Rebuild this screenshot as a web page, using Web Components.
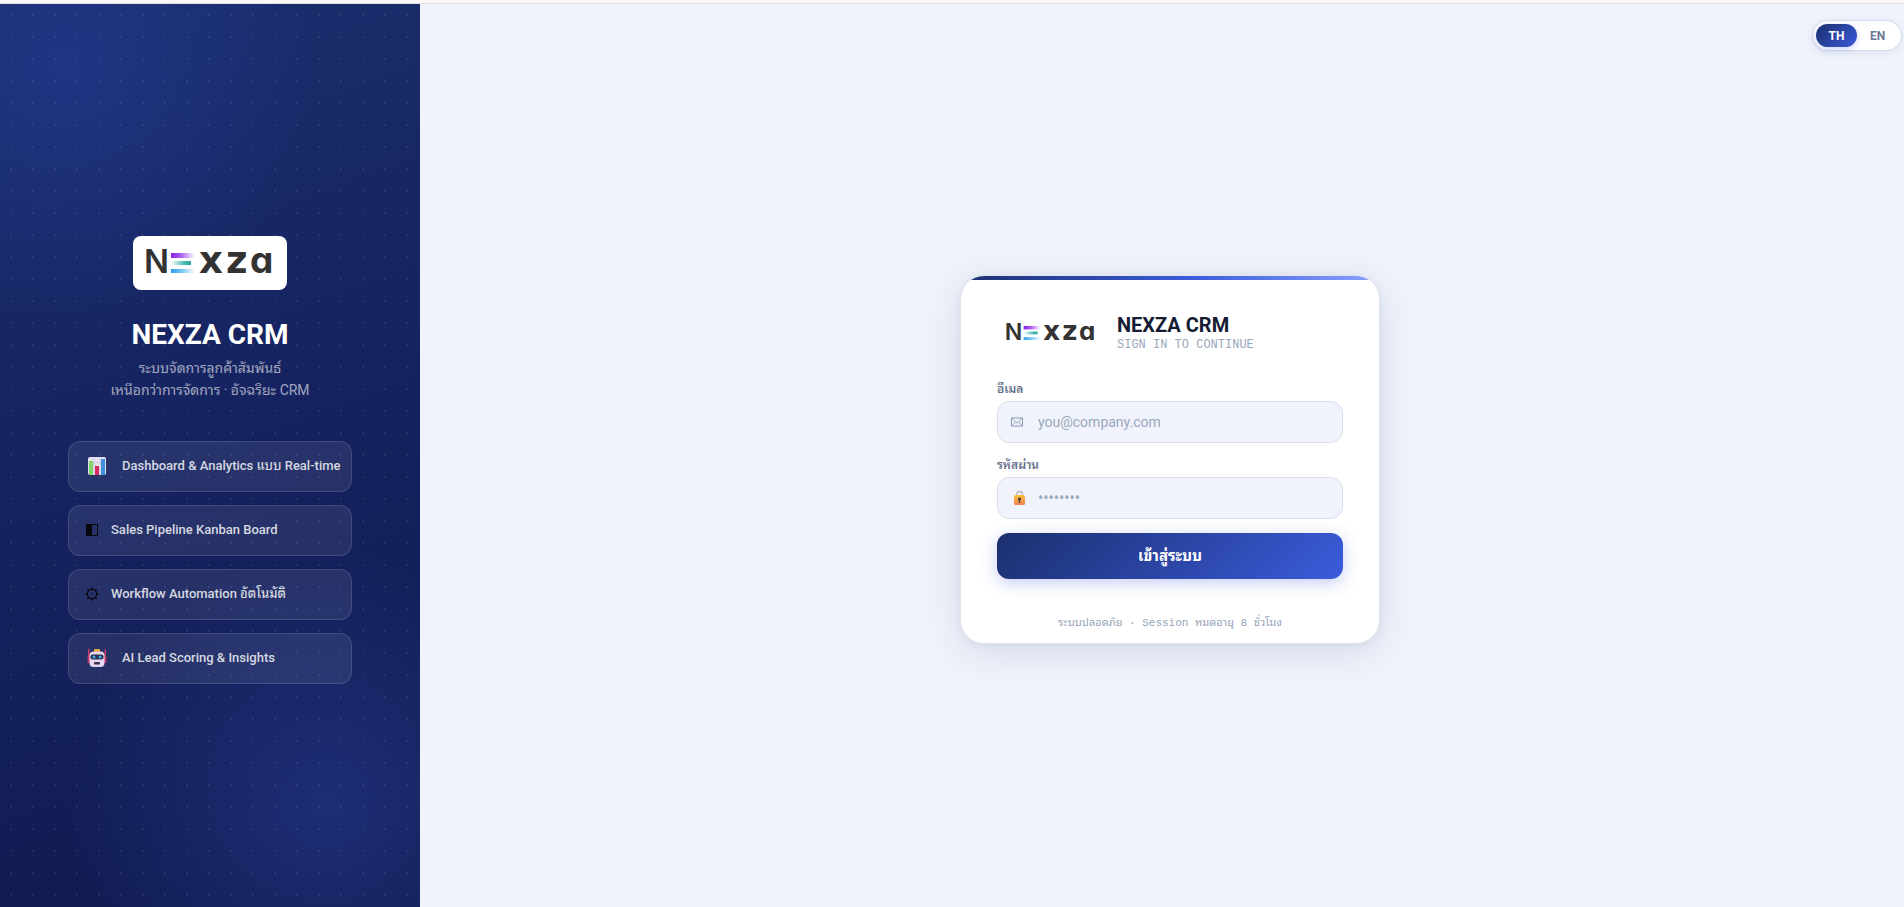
<!DOCTYPE html>
<html lang="th">
<head>
<meta charset="utf-8">
<meta name="viewport" content="width=device-width, initial-scale=1">
<title>NEXZA CRM</title>
<style>
html, body { height: 100%; margin: 0; }
body {
  --sans: Roboto, "Noto Sans Thai Looped", "Noto Looped Thai", Sarabun, Loma, Garuda, Waree, sans-serif;
  --mono: "Liberation Mono", "Noto Sans Thai Looped", "Noto Looped Thai", Sarabun, Loma, Garuda, Waree, monospace;
  font-family: var(--sans); background: #f0f3fb; color: #141c33;
}
</style>
</head>
<body>
<crm-login-page></crm-login-page>

<template id="t-page">
<style>
:host { display: flex; flex-direction: column; min-height: 100vh; }
.strip { height: 3px; background: #fcf8f8; border-bottom: 1px solid #dcdee4; }
.shell { flex: 1; display: grid; grid-template-columns: 420px minmax(0, 1fr); }
main { display: grid; padding: 8px 2px 0 18px; }
main > * { grid-area: 1 / 1; }
crm-lang-toggle { place-self: start end; margin-top: 8px; }
crm-login-card { place-self: center; width: 100%; max-width: 420px; }
</style>
<div class="strip"></div>
<div class="shell">
  <crm-brand-panel>
    <crm-feature icon="chart">Dashboard &amp; Analytics แบบ Real-time</crm-feature>
    <crm-feature icon="board">Sales Pipeline Kanban Board</crm-feature>
    <crm-feature icon="gear">Workflow Automation อัตโนมัติ</crm-feature>
    <crm-feature icon="robot">AI Lead Scoring &amp; Insights</crm-feature>
  </crm-brand-panel>
  <main>
    <crm-login-card></crm-login-card>
    <crm-lang-toggle></crm-lang-toggle>
  </main>
</div>
</template>

<template id="t-logo">
<style>
:host { display: block; }
svg { display: block; width: 100%; height: auto; }
text { font-family: Inter, sans-serif; font-weight: 700; fill: #333; font-feature-settings: "cv11"; }
.cap { font-weight: 600; }
.wide { font-family: "DejaVu Sans", sans-serif; }
</style>
<svg viewBox="0 0 154 54" role="img" aria-label="Nexza">
  <defs>
    <linearGradient id="p"><stop stop-color="#8a1fe8"/><stop offset=".4" stop-color="#a85cf0"/><stop offset="1" stop-color="#fff"/></linearGradient>
    <linearGradient id="g"><stop stop-color="#fff"/><stop offset=".7" stop-color="#3fb8ac"/><stop offset="1" stop-color="#2aa79b"/></linearGradient>
    <linearGradient id="b"><stop stop-color="#2a9df0"/><stop offset=".4" stop-color="#6cc3f5"/><stop offset="1" stop-color="#fff"/></linearGradient>
  </defs>
  <text x="11" y="37" font-size="33" class="cap">N</text>
  <rect x="38" y="17" width="24" height="5" fill="url(#p)"/>
  <rect x="38" y="25" width="20" height="4" fill="url(#g)"/>
  <rect x="38" y="33" width="24" height="4" fill="url(#b)"/>
  <text x="66 93" y="37" font-size="37" class="wide">xz</text>
  <text x="117" y="37" font-size="37">a</text>
</svg>
</template>

<template id="t-panel">
<style>
:host {
  display: flex; flex-direction: column; align-items: center; justify-content: center;
  box-sizing: border-box; padding: 8px 68px 0; color: #fff;
  background:
    radial-gradient(circle at 11px 11px, rgba(255,255,255,.07) 1px, transparent 1px) 0 0 / 22px 22px,
    radial-gradient(circle at 16% 7%, rgba(38,62,155,.5), transparent 250px),
    radial-gradient(circle at 78% 89%, rgba(46,68,160,.45), transparent 260px),
    linear-gradient(160deg, #1b2f6e 0%, #15225f 50%, #101a4e 100%);
}
crm-logo { width: 154px; background: #fff; border-radius: 8px; }
h1 { margin: 27px 0 0; font-size: 28px; line-height: 36px; font-weight: 700; }
p { margin: 4px 0 0; font-size: 14px; line-height: 22px; text-align: center; color: rgba(255,255,255,.6); }
.features { display: flex; flex-direction: column; gap: 13px; margin-top: 40px; align-self: stretch; }
</style>
<crm-logo></crm-logo>
<h1>NEXZA CRM</h1>
<p>ระบบจัดการลูกค้าสัมพันธ์<br>เหนือกว่าการจัดการ · อัจฉริยะ CRM</p>
<div class="features"><slot></slot></div>
</template>

<template id="t-feature">
<style>
:host {
  display: flex; align-items: center; gap: 12px; box-sizing: border-box; min-height: 51px; padding: 0 16px;
  border: 1px solid rgba(255,255,255,.13); border-radius: 12px; background: rgba(255,255,255,.08);
  font-size: 13px; line-height: 20px; font-weight: 500; color: rgba(255,255,255,.82); white-space: nowrap;
}
svg { display: block; flex: none; }
</style>
<span id="icon"></span><span><slot></slot></span>
</template>

<template id="t-card">
<style>
:host {
  display: block; box-sizing: border-box; position: relative; overflow: hidden; padding: 37px 36px 11px;
  border: 1px solid #e1e4ec; border-radius: 24px; background: #fff;
  box-shadow: 0 8px 40px rgba(27,47,110,.12), 0 2px 8px rgba(27,47,110,.06);
}
.bar { position: absolute; inset: 0 0 auto; height: 4px; background: linear-gradient(90deg, #1b2f6e, #3b5bdb 55%, #8aa2ff); }
header { display: flex; align-items: center; gap: 12px; margin-bottom: 28px; }
crm-logo { width: 108px; }
h2 { margin: 0; font-size: 20px; line-height: 24px; font-weight: 700; }
header p { margin: 0; font: 12px/16px var(--mono); color: #9aa8bc; }
form { display: flex; flex-direction: column; gap: 14px; }
button {
  height: 46px; border: 0; border-radius: 12px; color: #fff; font: 700 15px/20px var(--sans);
  background: linear-gradient(135deg, #1b2f6e, #3b5bdb); box-shadow: 0 4px 16px rgba(59,91,219,.3); cursor: pointer;
}
footer { margin-top: 35px; text-align: center; font: 11px/18px var(--mono); color: #94a3b8; }
</style>
<div class="bar"></div>
<header>
  <crm-logo></crm-logo>
  <div><h2>NEXZA CRM</h2><p>SIGN IN TO CONTINUE</p></div>
</header>
<form>
  <crm-field label="อีเมล" type="email" placeholder="you@company.com" icon="mail"></crm-field>
  <crm-field label="รหัสผ่าน" type="password" placeholder="••••••••" icon="lock"></crm-field>
  <button type="button">เข้าสู่ระบบ</button>
</form>
<footer>ระบบปลอดภัย · Session หมดอายุ 8 ชั่วโมง</footer>
</template>

<template id="t-field">
<style>
:host { display: block; }
label { display: block; margin-bottom: 4px; font-size: 12px; line-height: 16px; font-weight: 600; color: #64708b; }
.box { display: flex; align-items: center; box-sizing: border-box; height: 42px; border: 1px solid #d9dee8; border-radius: 12px; background: #f0f3fb; }
#icon { flex: none; width: 40px; }
svg { display: block; }
input { flex: 1; min-width: 0; padding: 0; border: 0; outline: 0; background: none; font: 14px/20px var(--sans); color: #141c33; }
input[type=password] { font-family: "Noto Sans", sans-serif; }
input::placeholder { color: #9aa8bc; opacity: 1; }
</style>
<label for="input"></label>
<div class="box"><span id="icon"></span><input id="input"></div>
</template>

<template id="t-toggle">
<style>
:host { display: flex; box-sizing: border-box; padding: 3px; border: 1px solid #d5dcf0; border-radius: 16px; background: #fff; box-shadow: 0 2px 8px rgba(27,47,110,.08); }
button { width: 41px; height: 23px; padding: 0; border: 0; border-radius: 12px; background: none; font: 700 12px/16px Roboto, sans-serif; color: #6b7a96; cursor: pointer; }
button[aria-pressed=true] { color: #fff; background: linear-gradient(135deg, #1b2f6e, #3b5bdb); box-shadow: 0 2px 6px rgba(59,91,219,.25); }
</style>
<button type="button" aria-pressed="true">TH</button><button type="button" aria-pressed="false">EN</button>
</template>

<script>
const icons = {
  chart: `<svg width="25" height="20" viewBox="0 0 25 20"><rect x="3" y="1" width="18" height="18" rx="2" fill="#e6e3f0"/><path d="M3 7h18M3 13h18M9 1v18M15 1v18" stroke="#c9c4dc" stroke-width=".7"/><rect x="4" y="5" width="4" height="14" fill="#80d668"/><rect x="10" y="10" width="4" height="9" fill="#d52c62"/><rect x="16" y="3" width="4" height="16" fill="#3d91df"/></svg>`,
  board: `<svg width="14" height="14" viewBox="0 0 14 14"><rect x="1.5" y="1.5" width="11" height="11" fill="none" stroke="#05070f"/><path d="M1 1h6v12H1z" fill="#05070f"/></svg>`,
  gear: `<svg width="14" height="14" viewBox="0 0 14 14" fill="none" stroke="#05070f"><circle cx="7" cy="7" r="4.7" stroke-width="1.2"/><circle cx="7" cy="7" r=".7" fill="#05070f" stroke="none"/><path d="M7 .5v2M7 11.5v2M.5 7h2M11.5 7h2M2.4 2.4l1.4 1.4M10.2 10.2l1.4 1.4M2.4 11.6l1.4-1.4M10.2 3.8l1.4-1.4" stroke-width="1.5"/></svg>`,
  robot: `<svg width="25" height="20" viewBox="-1 0 25 20"><path d="M2.7 1v9M19.3 1v9" stroke="#d33a68" stroke-width="1.4"/><rect x="1.6" y="7" width="3" height="8" rx="1" fill="#c53465"/><rect x="17.4" y="7" width="3" height="8" rx="1" fill="#c53465"/><rect x="8" y="1" width="6" height="4" rx="1" fill="#eda73b"/><rect x="3.5" y="3.5" width="15" height="15.5" rx="4" fill="#e4d6f0"/><rect x="4.5" y="6.5" width="13" height="5" rx="2" fill="#303150"/><circle cx="8" cy="9" r="1.5" fill="#35a9e2"/><circle cx="14" cy="9" r="1.5" fill="#35a9e2"/><rect x="8" y="14" width="6" height="2.4" rx="1" fill="#3c3155"/></svg>`,
  mail: `<svg width="40" height="14" viewBox="0 0 40 14" fill="none" stroke="#8c9bb3"><rect x="13.5" y="3" width="11" height="8"/><path d="M14 3.5l5 4.5 5-4.5M14 10.5l3.5-3.7M24 10.5l-3.5-3.7" stroke-width=".8"/></svg>`,
  lock: `<svg width="40" height="16" viewBox="0 0 40 16"><defs><linearGradient id="l" x2="0" y2="1"><stop stop-color="#f8c23c"/><stop offset="1" stop-color="#f08050"/></linearGradient></defs><path d="M18.5 7V4.5a3 3 0 0 1 6 0V7" fill="none" stroke="#b6b3c0" stroke-width="1.3"/><rect x="16" y="5" width="11" height="10" rx="1.5" fill="url(#l)"/><circle cx="21.5" cy="9" r="1.5" fill="#4b3440"/><path d="M20.9 9h1.2v4h-1.2z" fill="#4b3440"/></svg>`
};
class Part extends HTMLElement {
  constructor() {
    super();
    this.attachShadow({ mode: "open" }).append(document.getElementById(this.constructor.template).content.cloneNode(true));
  }
}
class WithIcon extends Part {
  connectedCallback() { this.shadowRoot.getElementById("icon").innerHTML = icons[this.getAttribute("icon")]; }
}
customElements.define("crm-logo", class extends Part { static template = "t-logo"; });
customElements.define("crm-feature", class extends WithIcon { static template = "t-feature"; });
customElements.define("crm-brand-panel", class extends Part { static template = "t-panel"; });
customElements.define("crm-field", class extends WithIcon {
  static template = "t-field";
  connectedCallback() {
    super.connectedCallback();
    this.shadowRoot.querySelector("label").textContent = this.getAttribute("label");
    const input = this.shadowRoot.querySelector("input");
    input.type = this.getAttribute("type");
    input.placeholder = this.getAttribute("placeholder");
  }
});
customElements.define("crm-login-card", class extends Part { static template = "t-card"; });
customElements.define("crm-lang-toggle", class extends Part {
  static template = "t-toggle";
  connectedCallback() {
    const buttons = [...this.shadowRoot.querySelectorAll("button")];
    buttons.forEach(b => b.addEventListener("click", () => buttons.forEach(o => o.setAttribute("aria-pressed", o === b))));
  }
});
customElements.define("crm-login-page", class extends Part { static template = "t-page"; });
</script>
</body>
</html>
